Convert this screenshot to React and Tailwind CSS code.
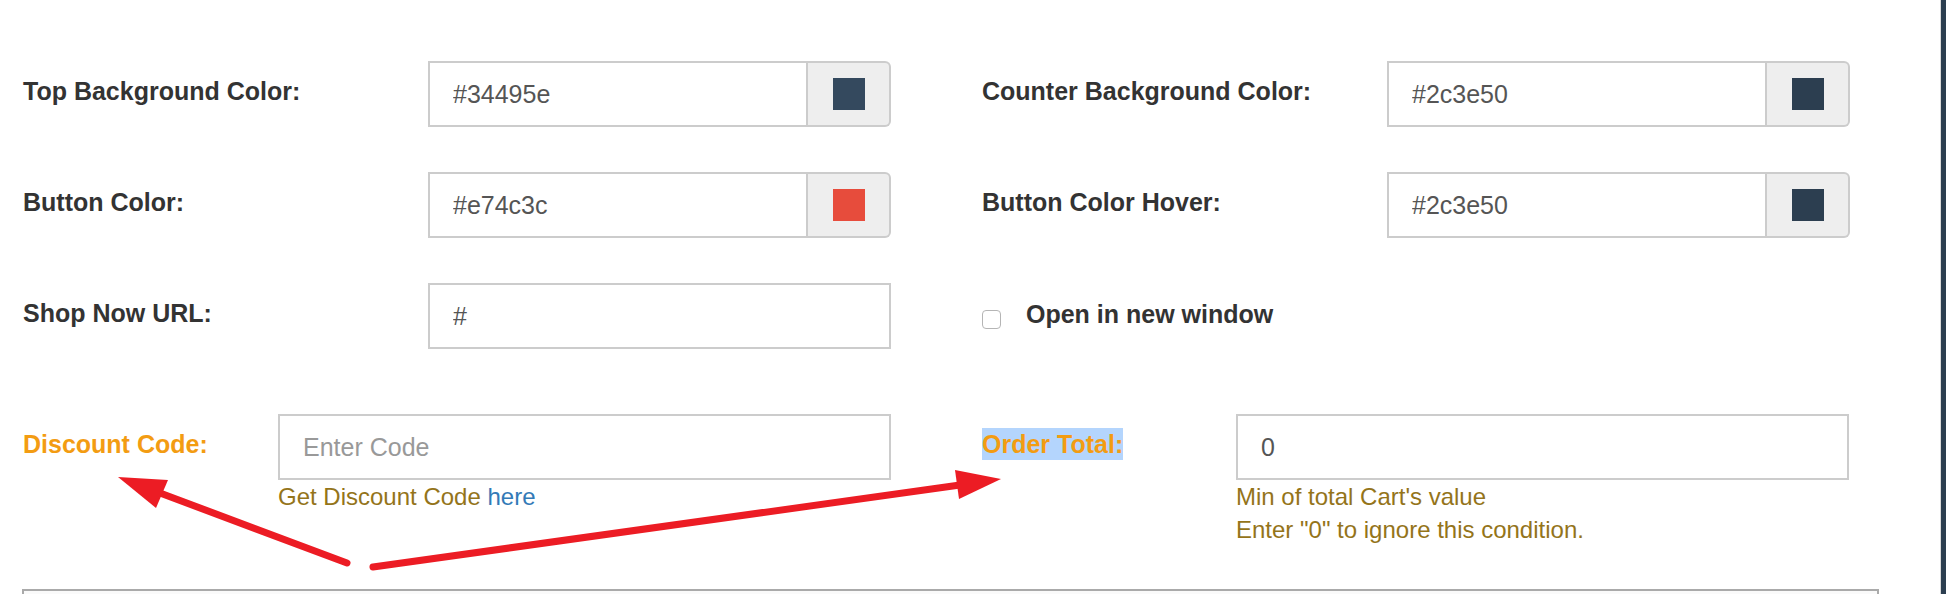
import React from "react";

const font = { fontFamily: '"Liberation Sans", Arial, Helvetica, sans-serif' };

function ColorInput({ value, swatch }) {
  return (
    <div className="flex h-[66px] w-[463px]">
      <input
        readOnly
        defaultValue={value}
        className="h-full min-w-0 flex-1 border-2 border-[#ccc] bg-white px-[23px] text-[25px] text-[#555] outline-none"
        style={font}
      />
      <div className="flex h-full w-[83px] items-center justify-center rounded-r-[6px] border-2 border-l-0 border-[#ccc] bg-[#eee]">
        <div className="h-[32px] w-[32px]" style={{ backgroundColor: swatch }} />
      </div>
    </div>
  );
}

function TextInput({ value, placeholder, width }) {
  return (
    <input
      readOnly
      defaultValue={value}
      placeholder={placeholder}
      className={`h-[66px] ${width} border-2 border-[#ccc] bg-white px-[23px] text-[25px] text-[#555] outline-none placeholder:text-[#999]`}
      style={font}
    />
  );
}

function Label({ children }) {
  return (
    <div className="mb-[6px] w-[405px] shrink-0 text-[25px] font-bold leading-[30px] text-[#333]">
      {children}
    </div>
  );
}

export default function App() {
  return (
    <div className="relative flex h-[594px] w-[1946px] overflow-hidden bg-white" style={font}>
      <div className="flex-1">
        <div className="pt-[61px]">
          {/* Row 1 */}
          <div className="grid h-[66px] grid-cols-[958px_1fr]">
            <div className="flex items-center pl-[23px]">
              <Label>Top Background Color:</Label>
              <ColorInput value="#34495e" swatch="#34495e" />
            </div>
            <div className="flex items-center pl-[24px]">
              <Label>Counter Background Color:</Label>
              <ColorInput value="#2c3e50" swatch="#2c3e50" />
            </div>
          </div>
          {/* Row 2 */}
          <div className="mt-[45px] grid h-[66px] grid-cols-[958px_1fr]">
            <div className="flex items-center pl-[23px]">
              <Label>Button Color:</Label>
              <ColorInput value="#e74c3c" swatch="#e74c3c" />
            </div>
            <div className="flex items-center pl-[24px]">
              <Label>Button Color Hover:</Label>
              <ColorInput value="#2c3e50" swatch="#2c3e50" />
            </div>
          </div>
          {/* Row 3 */}
          <div className="mt-[45px] grid h-[66px] grid-cols-[958px_1fr]">
            <div className="flex items-center pl-[23px]">
              <Label>Shop Now URL:</Label>
              <TextInput value="#" width="w-[463px]" />
            </div>
            <div className="flex items-center pl-[24px]">
              <div className="mt-[6px] h-[19px] w-[19px] rounded-[4px] border border-[#b5b5b5] bg-white" />
              <div className="mb-[4px] ml-[25px] text-[25px] font-bold leading-[30px] text-[#333]">
                Open in new window
              </div>
            </div>
          </div>
          {/* Row 4 */}
          <div className="mt-[65px] grid grid-cols-[958px_1fr]">
            <div className="flex items-start pl-[23px]">
              <div className="w-[255px] shrink-0 pt-[14px]">
                <span className="inline-block h-[32px] text-[25px] font-bold leading-[32px] text-[#f39c12]">
                  Discount Code:
                </span>
              </div>
              <div className="flex flex-col">
                <TextInput placeholder="Enter Code" width="w-[613px]" />
                <div className="text-[24px] leading-[33px] text-[#94741a]">
                  Get Discount Code <span className="text-[#337ab7]">here</span>
                </div>
              </div>
            </div>
            <div className="flex items-start pl-[24px]">
              <div className="w-[254px] shrink-0 pt-[14px]">
                <span className="inline-block h-[32px] bg-[#b4d5fd] text-[25px] font-bold leading-[32px] text-[#f39c12]">
                  Order Total:
                </span>
              </div>
              <div className="flex flex-col">
                <TextInput value="0" width="w-[613px]" />
                <div className="text-[24px] leading-[33px] text-[#94741a]">
                  Min of total Cart's value
                </div>
                <div className="text-[24px] leading-[33px] text-[#94741a]">
                  Enter "0" to ignore this condition.
                </div>
              </div>
            </div>
          </div>
          {/* Bottom box */}
          <div className="ml-[22px] mt-[43px] h-[40px] w-[1857px] border-2 border-[#aaa] bg-[#fafafa]" />
        </div>
      </div>
      <div className="w-[1px] bg-[#d9d9d9]" />
      <div className="w-[5px] bg-[#2c3e50]" />

      <svg
        className="pointer-events-none absolute left-0 top-0"
        width="1946"
        height="594"
        viewBox="0 0 1946 594"
      >
        <g stroke="#ec1c24" strokeWidth="7" strokeLinecap="round" fill="none">
          <line x1="347" y1="563" x2="160" y2="493" />
          <line x1="373" y1="567" x2="960" y2="485" />
        </g>
        <g fill="#ec1c24">
          <polygon points="118,477 168,480 156,508" />
          <polygon points="1001,479 955,470 959,499" />
        </g>
      </svg>
    </div>
  );
}
